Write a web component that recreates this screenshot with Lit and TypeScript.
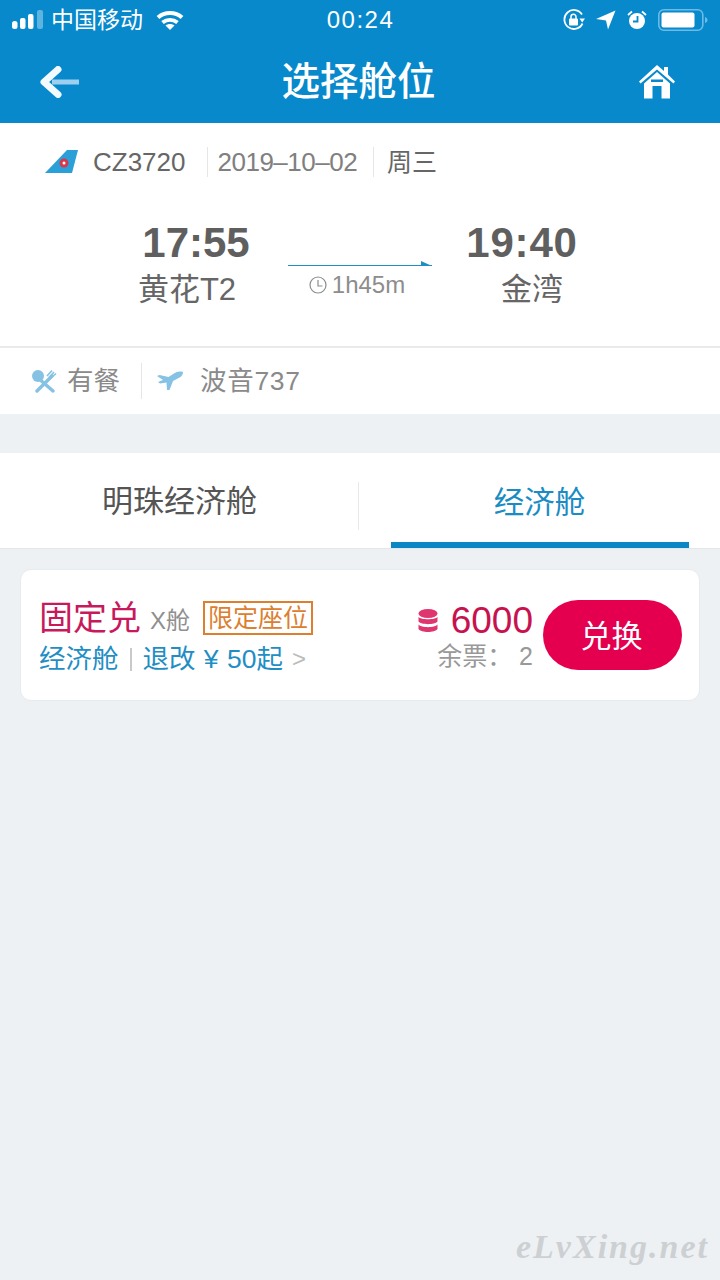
import { LitElement, html, css } from "lit";
import { customElement } from "lit/decorators.js";

@customElement("app-root")
export class AppRoot extends LitElement {
  static styles = css`
    :host {
      display: block;
      position: relative;
      height: 1280px;
      overflow: hidden;
      background: #edf1f4;
      font-family: "Liberation Sans", "Noto Sans CJK SC", sans-serif;
      color: #666;
    }
    .top {
      height: 123px;
      background: #0789cc;
      color: #fff;
    }
    .status {
      height: 40px;
      display: grid;
      grid-template-columns: 1fr auto 1fr;
      align-items: center;
      padding: 0 12px;
    }
    .status-left,
    .status-right {
      display: flex;
      align-items: center;
    }
    .status-right {
      justify-content: flex-end;
    }
    .carrier {
      margin: 0 13px 0 7px;
      font-size: 23px;
      line-height: 30px;
    }
    .clock {
      letter-spacing: 1.500px;
      font-size: 24px;
      line-height: 30px;
      padding-left: 1px;
    }
    .nav {
      height: 83px;
      display: grid;
      grid-template-columns: 1fr auto 1fr;
      align-items: center;
      padding: 0 45px 6px 40px;
    }
    .nav h1 {
      margin: 0 0 0 2px;
      font-size: 38.500px;
      font-weight: 500;
      line-height: 50px;
    }
    .nav .home {
      justify-self: end;
    }
    .flight {
      height: 223px;
      background: #fff;
      border-bottom: 2px solid #e8eaeb;
    }
    .flight-head {
      display: flex;
      align-items: center;
      height: 78px;
      padding: 0 0 0 45px;
      font-size: 26px;
      line-height: 30px;
      color: #666;
    }
    .flight-no {
      margin-left: 12px;
      padding-right: 21px;
      border-right: 1px solid #e6e6e6;
    }
    .flight-date {
      padding: 0 16px 0 10px;
      border-right: 1px solid #e6e6e6;
      letter-spacing: -0.5px;
      color: #808080;
    }
    .flight-day {
      margin-left: 13px;
      font-size: 25px;
    }
    .route {
      display: grid;
      grid-template-columns: 288px 144px 1fr;
    }
    .stop {
      display: flex;
      flex-direction: column;
      align-items: center;
    }
    .stop.dep {
      padding-left: 86px;
    }
    .stop.dep .time {
      margin-left: 18px;
    }
    .stop.arr {
      width: 180px;
      margin-left: 10px;
    }
    .stop.arr .time {
      margin-right: 20px;
      letter-spacing: 0.8px;
    }
    .time {
      font-size: 42px;
      font-weight: 700;
      line-height: 48px;
      margin-top: 18px;
      color: #5f5f5f;
    }
    .place {
      font-size: 31px;
      line-height: 46px;
      color: #666;
    }
    .duration {
      margin-top: 59px;
      display: flex;
      flex-direction: column;
      align-items: center;
    }
    .duration svg.arrow {
      display: block;
    }
    .length {
      display: flex;
      align-items: center;
      gap: 5px;
      margin-top: 3px;
      padding-right: 6px;
      font-size: 24px;
      line-height: 28px;
      color: #8d8d8d;
    }
    .extras {
      display: flex;
      align-items: center;
      height: 66px;
      background: #fff;
      padding-left: 31px;
      font-size: 26.500px;
      line-height: 36px;
      color: #8a8a8a;
    }
    .extras .meal {
      margin-left: 10px;
      padding-right: 21px;
      border-right: 1px solid #e6e6e6;
    }
    .extras .plane {
      margin: 0 17px 0 15px;
    }
    .extras .model {
      letter-spacing: 0.7px;
    }
    .tabs {
      display: grid;
      grid-template-columns: 359px 1fr;
      height: 95px;
      margin-top: 39px;
      background: #fff;
      border-bottom: 1px solid #e4e7e9;
      font-size: 31px;
      line-height: 40px;
    }
    .tab {
      display: flex;
      justify-content: center;
      align-items: center;
      position: relative;
      padding-top: 3px;
      color: #555;
    }
    .tab:first-child::after {
      content: "";
      position: absolute;
      right: 0;
      top: 29px;
      height: 48px;
      width: 1px;
      background: #e8e8e8;
    }
    .tab.active {
      color: #1a8cc4;
      font-size: 30.500px;
    }
    .tab.active::after {
      content: "";
      position: absolute;
      left: 32px;
      right: 31px;
      bottom: 0;
      height: 6px;
      background: #0b87c3;
    }
    .card {
      display: flex;
      align-items: center;
      justify-content: space-between;
      height: 130px;
      margin: 20px 20px 0;
      padding: 0 17px 0 18px;
      background: #fff;
      border: 1px solid #e8ebee;
      border-radius: 11px;
    }
    .fare {
      margin-top: 2px;
    }
    .fare-title {
      display: flex;
      align-items: center;
      height: 46px;
    }
    .fare-name {
      font-size: 34px;
      color: #c7195c;
      line-height: 46px;
    }
    .cabin {
      font-size: 24px;
      line-height: 30px;
      color: #8f8f8f;
      margin: 5px 13px 0 9px;
    }
    .limit {
      border: 2px solid #dc8030;
      color: #dc8030;
      font-size: 25px;
      line-height: 30px;
      padding: 0 3px;
      margin-top: -1px;
    }
    .fare-rules {
      display: flex;
      align-items: center;
      font-size: 26.500px;
      line-height: 36px;
      word-spacing: 1px;
      color: #1f8ec4;
    }
    .fare-rules .sep {
      width: 2px;
      height: 23px;
      background: #c9c9c9;
      margin: 0 11px 0 11px;
    }
    .fare-rules .more {
      color: #bbb;
      font-size: 24px;
      margin-left: 9px;
    }
    .buy {
      display: flex;
      align-items: center;
      gap: 10px;
    }
    .price {
      display: flex;
      flex-direction: column;
      align-items: flex-end;
      margin-top: 1px;
    }
    .points {
      display: flex;
      align-items: center;
      gap: 13px;
      font-size: 37px;
      line-height: 40px;
      color: #c7124f;
    }
    .left {
      font-size: 25px;
      line-height: 30px;
      color: #999;
    }
    button {
      width: 139px;
      height: 70px;
      border: 0;
      border-radius: 35px;
      background: #e4004f;
      color: #fff;
      font: inherit;
      font-size: 31px;
      padding: 0 2px 3px 0;
    }
    .watermark {
      position: absolute;
      left: 516px;
      top: 1227px;
      font-family: "Liberation Serif", serif;
      font-style: italic;
      font-weight: 700;
      font-size: 34px;
      letter-spacing: 2px;
      line-height: 40px;
      color: #cdd0d2;
    }
  `;

  render() {
    return html`
      <header class="top">
        <div class="status">
          <div class="status-left">
            <svg width="32" height="20" viewBox="0 0 32 20" fill="#fff">
              <rect x="0" y="11" width="5.500" height="8" rx="2.500"/>
              <rect x="8" y="8" width="5.500" height="11" rx="2"/>
              <rect x="16" y="4" width="5.500" height="15" rx="2"/>
              <rect x="25" y="0" width="6" height="19" rx="2" fill="#5cb4e0"/>
            </svg>
            <span class="carrier">中国移动</span>
            <svg width="28" height="20" viewBox="0 0 28 20" fill="none" stroke="#fff" stroke-width="4">
              <path d="M2 7.500C8.500 1.500 19.500 1.500 26 7.500"/>
              <path d="M6.500 12.500C11 9 17 9 21.500 12.500"/>
              <path d="M14 20L9.500 15.500C12 13.500 16 13.500 18.500 15.500Z" fill="#fff" stroke="none"/>
            </svg>
          </div>
          <div class="clock">00:24</div>
          <div class="status-right">
            <svg width="22" height="22" viewBox="0 0 22 22" fill="none" stroke="#fff" stroke-width="1.800">
              <path d="M19.500 14.500A9.500 9.500 0 1 1 19 5.500"/>
              <path d="M16.500 9.500H22L19.200 13.500Z" fill="#fff" stroke="none"/>
              <rect x="6" y="9.500" width="9" height="7" rx="1" fill="#fff" stroke="none"/>
              <path d="M8 10V7.800A2.500 2.500 0 0 1 13 7.800V10" stroke-width="1.500"/>
            </svg>
            <svg style="margin-left:11px" width="20" height="20" viewBox="0 0 20 20" fill="#fff">
              <path d="M19.500 0.500L0 9L10 10.500L12 19.500Z"/>
            </svg>
            <svg style="margin-left:11px" width="20" height="20" viewBox="0 0 20 20" fill="#fff">
              <circle cx="10" cy="11" r="8"/>
              <path d="M10.500 6V11.500H6" fill="none" stroke="#0789cc" stroke-width="1.800"/>
              <path d="M1 5L5 1.500M19 5L15 1.500" stroke="#fff" stroke-width="1.800"/>
            </svg>
            <svg style="margin-left:11px" width="50" height="22" viewBox="0 0 50 22">
              <rect x="0.800" y="0.800" width="44" height="20.400" rx="5" fill="none" stroke="#6cbbe6" stroke-width="1.600"/>
              <rect x="3.500" y="3.500" width="33" height="15" rx="2" fill="#fff"/>
              <path d="M47 8C48.500 8.500 49.500 9.500 49.500 11C49.500 12.500 48.500 13.500 47 14Z" fill="#6cbbe6"/>
            </svg>
          </div>
        </div>
        <nav class="nav">
          <svg width="40" height="32" viewBox="0 0 40 32">
            <path d="M18 3.500L4 16L18 28.500" fill="none" stroke="#f2faff" stroke-width="7" stroke-linecap="round" stroke-linejoin="round"/>
            <rect x="12" y="13.500" width="27" height="5" fill="#9dd0ee"/>
          </svg>
          <h1>选择舱位</h1>
          <svg class="home" width="36" height="34" viewBox="0 0 36 34" fill="#fff">
            <path d="M18 0L25 6V2H29V9.500L36 16.500L34.500 18.500L18 4.500L1.500 18.500L0 16.500Z"/>
            <path d="M18 7L31 18.500V33.500H22.500V21H13.500V33.500H5V18.500Z"/>
            <rect x="12" y="14.500" width="12" height="2.500" fill="#0789cc"/>
          </svg>
        </nav>
      </header>

      <section class="flight">
        <div class="flight-head">
          <svg width="36" height="24" viewBox="0 0 36 24">
            <path d="M22 0H33L27 23H0Z" fill="#2a9fd8"/>
            <circle cx="19" cy="13" r="4.500" fill="#d8384a"/>
            <circle cx="19" cy="13" r="1.500" fill="#fff"/>
          </svg>
          <span class="flight-no">CZ3720</span>
          <span class="flight-date">2019–10–02</span>
          <span class="flight-day">周三</span>
        </div>
        <div class="route">
          <div class="stop dep">
            <div class="time">17:55</div>
            <div class="place">黄花T2</div>
          </div>
          <div class="duration">
            <svg class="arrow" width="144" height="8" viewBox="0 0 144 8">
              <rect x="0" y="5" width="144" height="1" fill="#1e8fc6"/>
              <path d="M133 1L144 6H133Z" fill="#1e8fc6"/>
            </svg>
            <div class="length">
              <svg width="18" height="18" viewBox="0 0 18 18" fill="none" stroke="#8d8d8d" stroke-width="1.200">
                <circle cx="9" cy="9" r="8"/>
                <path d="M9 4V10H13.500"/>
              </svg>
              <span>1h45m</span>
            </div>
          </div>
          <div class="stop arr">
            <div class="time">19:40</div>
            <div class="place">金湾</div>
          </div>
        </div>
      </section>

      <section class="extras">
        <svg width="26" height="24" viewBox="0 0 26 24" fill="#85c2e3">
          <ellipse cx="7" cy="7" rx="6" ry="6"/>
          <path d="M7 9L22 22" stroke="#85c2e3" stroke-width="3.400" stroke-linecap="round"/>
          <path d="M21 7L6 22" stroke="#85c2e3" stroke-width="3.400" stroke-linecap="round"/>
          <path d="M16 7L21 1.500M19 10L25 4.500M18 8.500L23 3" stroke="#85c2e3" stroke-width="1.600"/>
        </svg>
        <span class="meal">有餐</span>
        <svg class="plane" width="26" height="20" viewBox="0 0 26 20" fill="#85c2e3">
          <path d="M26 1C22 0 19.500 1 17 2.500L11.500 6L2.500 4L0 5L6 9L1 11L3 12.500L9.500 11.500L10 19L12.500 19L16 10L23.500 6C25 5 26 3 26 1Z"/>
        </svg>
        <span class="model">波音737</span>
      </section>

      <section class="tabs">
        <div class="tab">明珠经济舱</div>
        <div class="tab active">经济舱</div>
      </section>

      <section class="card">
        <div class="fare">
          <div class="fare-title">
            <span class="fare-name">固定兑</span>
            <span class="cabin">X舱</span>
            <span class="limit">限定座位</span>
          </div>
          <div class="fare-rules">
            <span>经济舱</span>
            <span class="sep"></span>
            <span>退改 ¥ 50起</span>
            <span class="more">&gt;</span>
          </div>
        </div>
        <div class="buy">
          <div class="price">
            <div class="points">
              <svg width="20" height="24" viewBox="0 0 20 24" fill="#e0366f">
                <ellipse cx="10" cy="4.500" rx="9.500" ry="4.500"/>
                <path d="M0.500 8C3 11 17 11 19.500 8V12.500C17 16 3 16 0.500 12.500Z"/>
                <path d="M0.500 15.500C3 19 17 19 19.500 15.500V20C17 24 3 24 0.500 20Z"/>
              </svg>
              <span>6000</span>
            </div>
            <div class="left">余票： 2</div>
          </div>
          <button>兑换</button>
        </div>
      </section>

      <div class="watermark">eLvXing.net</div>
    `;
  }
}
